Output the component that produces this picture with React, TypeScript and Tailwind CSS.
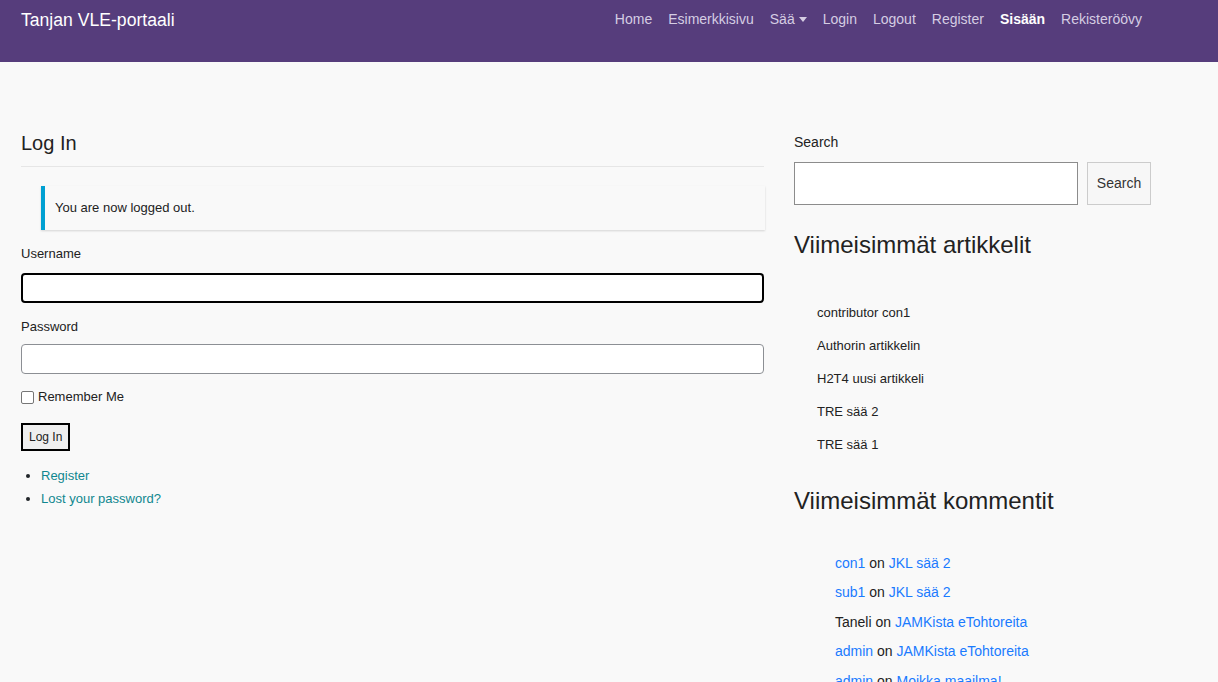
import React from 'react';

const navItems = ['Home', 'Esimerkkisivu', 'Sää', 'Login', 'Logout', 'Register', 'Sisään', 'Rekisteröövy'];

const recentPosts = ['contributor con1', 'Authorin artikkelin', 'H2T4 uusi artikkeli', 'TRE sää 2', 'TRE sää 1'];

const recentComments: { author: string; authorLink: boolean; post: string }[] = [
  { author: 'con1', authorLink: true, post: 'JKL sää 2' },
  { author: 'sub1', authorLink: true, post: 'JKL sää 2' },
  { author: 'Taneli', authorLink: false, post: 'JAMKista eTohtoreita' },
  { author: 'admin', authorLink: true, post: 'JAMKista eTohtoreita' },
  { author: 'admin', authorLink: true, post: 'Moikka maailma!' },
];

export default function App() {
  return (
    <div className="min-h-screen bg-[#f9f9f9] font-['Liberation_Sans',Arial,sans-serif] text-[#212529]">
      {/* Header */}
      <header className="h-[62px] bg-[#563d7c] flex items-start justify-between pl-[21px] pr-[68px]">
        <a className="mt-[9px] text-[17.6px] leading-[22px] text-white">Tanjan VLE-portaali</a>
        <nav className="flex mt-[9px]">
          {navItems.map((item) => (
            <a
              key={item}
              className={`px-[8px] text-[14px] leading-[20px] flex items-center ${
                item === 'Sisään' ? 'text-white font-bold' : 'text-[#d5cde3]'
              }`}
            >
              {item}
              {item === 'Sää' && (
                <span className="ml-[4px] inline-block w-0 h-0 border-l-[4px] border-r-[4px] border-t-[5px] border-l-transparent border-r-transparent border-t-[#d5cde3]" />
              )}
            </a>
          ))}
        </nav>
      </header>

      {/* Main */}
      <main className="flex pl-[21px] pt-[69px]">
        {/* Left column */}
        <section className="w-[743px]">
          <h1 className="text-[20px] leading-[24px] text-[#222] pb-[11px] border-b border-[#e6e6e6]">Log In</h1>

          <div className="ml-[20px] mt-[19px] w-[724px] h-[44px] bg-[#f9f9f9] border-l-[4px] border-[#00a0d2] shadow-[0_1px_2px_rgba(0,0,0,0.15)] flex items-center pl-[10px]">
            <p className="text-[13px] text-[#222]">You are now logged out.</p>
          </div>

          <form className="mt-[15px]">
            <label className="block text-[13px] leading-[18px] text-[#222]">Username</label>
            <input className="block mt-[10px] w-[743px] h-[30px] bg-white border-2 border-black rounded-[4px] outline-none" />

            <label className="block mt-[15px] text-[13px] leading-[18px] text-[#222]">Password</label>
            <input type="password" className="block mt-[8px] w-[743px] h-[30px] bg-white border border-[#8c8f94] rounded-[4px] outline-none" />

            <label className="flex items-center mt-[14px] text-[13px] leading-[18px] text-[#222]">
              <span className="inline-block w-[13px] h-[13px] border border-[#767676] rounded-[2px] bg-white mr-[4px]" />
              Remember Me
            </label>

            <button type="button" className="block mt-[17px] h-[28px] px-[6px] bg-[#efefef] border-2 border-black text-[12px] text-[#222]">
              Log In
            </button>
          </form>

          <ul className="mt-[13px] pl-[20px] list-disc text-[13px] leading-[23px]">
            <li><a className="text-[#10878f]">Register</a></li>
            <li><a className="text-[#10878f]">Lost your password?</a></li>
          </ul>
        </section>

        {/* Sidebar */}
        <aside className="ml-[30px] w-[357px]">
          <label className="block text-[14px] leading-[18px] mt-[2px] text-[#222]">Search</label>
          <div className="flex mt-[11px]">
            <input className="w-[284px] h-[43px] bg-white border border-[#8c8c8c] outline-none" />
            <button type="button" className="ml-[9px] w-[64px] h-[43px] bg-[#f7f7f7] border border-[#cccccc] text-[14px] text-[#333]">
              Search
            </button>
          </div>

          <h2 className="mt-[25px] text-[24px] leading-[30px] text-[#222]">Viimeisimmät artikkelit</h2>
          <ul className="mt-[44px] pl-[23px] text-[13px] text-[#222]">
            {recentPosts.map((p) => (
              <li key={p} className="h-[33px] leading-[18px]">{p}</li>
            ))}
          </ul>

          <h2 className="mt-[17px] text-[24px] leading-[30px] text-[#222]">Viimeisimmät kommentit</h2>
          <ul className="mt-[37px] pl-[41px] text-[14px] text-[#222]">
            {recentComments.map((c, i) => (
              <li key={i} className="h-[29.4px] leading-[20px]">
                {c.authorLink ? <a className="text-[#1a7bff]">{c.author}</a> : <span>{c.author}</span>}
                {' on '}
                <a className="text-[#1a7bff]">{c.post}</a>
              </li>
            ))}
          </ul>
        </aside>
      </main>
    </div>
  );
}
